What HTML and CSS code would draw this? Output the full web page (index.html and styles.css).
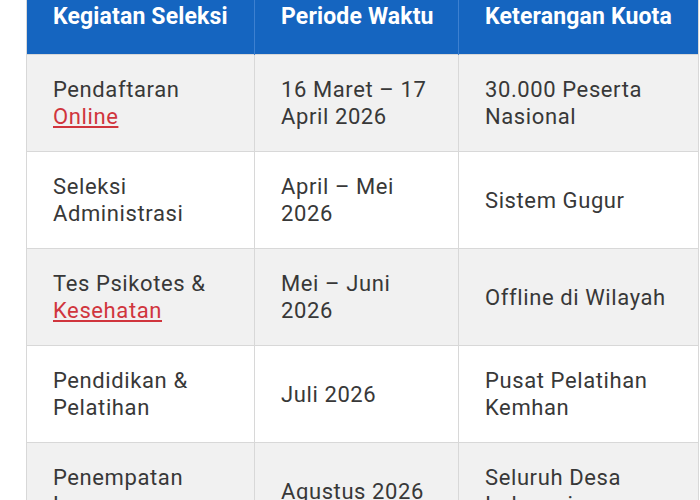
FILE: index.html
```html
<!DOCTYPE html>
<html lang="id">
<head>
<meta charset="utf-8">
<link rel="stylesheet" href="styles.css">
</head>
<body>
<div class="wrap">
<table class="jadwal">
  <colgroup>
    <col class="c1">
    <col class="c2">
    <col class="c3">
  </colgroup>
  <thead>
    <tr>
      <th>Kegiatan Seleksi</th>
      <th>Periode Waktu</th>
      <th>Keterangan Kuota</th>
    </tr>
  </thead>
  <tbody>
    <tr>
      <td>Pendaftaran <a href="#">Online</a></td>
      <td>16 Maret – 17 April 2026</td>
      <td>30.000 Peserta Nasional</td>
    </tr>
    <tr>
      <td>Seleksi Administrasi</td>
      <td>April – Mei 2026</td>
      <td>Sistem Gugur</td>
    </tr>
    <tr>
      <td>Tes Psikotes &amp; <a href="#">Kesehatan</a></td>
      <td>Mei – Juni 2026</td>
      <td>Offline di Wilayah</td>
    </tr>
    <tr>
      <td>Pendidikan &amp; Pelatihan</td>
      <td>Juli 2026</td>
      <td>Pusat Pelatihan Kemhan</td>
    </tr>
    <tr>
      <td>Penempatan Lapangan</td>
      <td>Agustus 2026</td>
      <td>Seluruh Desa Indonesia</td>
    </tr>
  </tbody>
</table>
</div>
</body>
</html>
```

FILE: styles.css
```css
html, body {
  margin: 0;
  padding: 0;
  background: #ffffff;
}
body {
  font-family: Roboto, "Liberation Sans", sans-serif;
  overflow: hidden;
}
.wrap {
  padding-left: 26px;
  margin-top: -16px;
}
.jadwal {
  width: 672px;
  border-collapse: collapse;
  table-layout: fixed;
  border: 1px solid #d8d8d8;
}
.jadwal .c1 { width: 228px; }
.jadwal .c2 { width: 204px; }
.jadwal .c3 { width: 240px; }
.jadwal th {
  background: #1565c0;
  color: #ffffff;
  font-weight: 700;
  font-size: 23px;
  letter-spacing: 0.15px;
  line-height: 27px;
  text-align: left;
  padding: 18px 20px 24px 26px;
  border-left: 1px solid #3d80d0;
  vertical-align: middle;
}
.jadwal th:first-child { border-left: none; }
.jadwal td {
  font-size: 22px;
  letter-spacing: 0.6px;
  line-height: 27px;
  color: #383838;
  padding: 21px 20px 21px 26px;
  border: 1px solid #d8d8d8;
  vertical-align: middle;
}
.jadwal tbody tr:nth-child(odd) td {
  background: #f1f1f1;
}
.jadwal tbody tr:nth-child(even) td {
  background: #ffffff;
}
.jadwal a {
  color: #d0353d;
  text-decoration: underline;
  text-underline-offset: 2px;
}
```
